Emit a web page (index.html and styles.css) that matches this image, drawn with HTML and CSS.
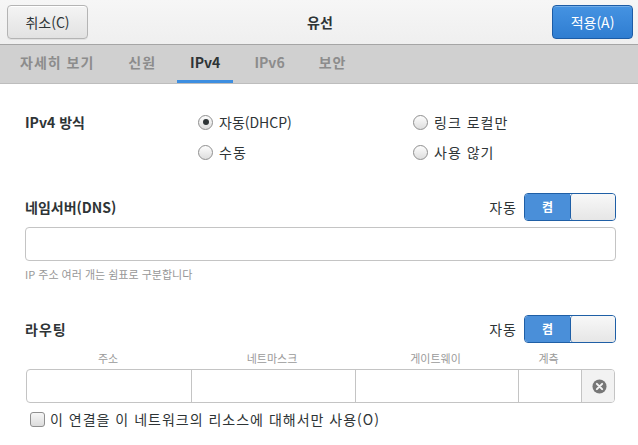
FILE: index.html
```html
<!DOCTYPE html>
<html lang="ko">

<head>
  <meta charset="utf-8">
  <title>유선</title>
  <link rel="stylesheet" href="styles.css">
</head>

<body>
  <div class="win">
    <div class="hbar">
      <button class="btn">취소(C)</button>
      <div class="title">유선</div>
      <button class="btn suggested">적용(A)</button>
    </div>

    <div class="tabs">
      <div class="tab ko">자세히 보기</div>
      <div class="tab ko">신원</div>
      <div class="tab active">IPv4</div>
      <div class="tab">IPv6</div>
      <div class="tab ko">보안</div>
    </div>

    <div class="page">
      <div class="method">
        <div class="lbl">IPv4 방식</div>
        <label class="radio"><span class="rb on"></span>자동(DHCP)</label>
        <label class="radio ko"><span class="rb"></span>링크 로컬만</label>
        <div></div>
        <label class="radio ko"><span class="rb"></span>수동</label>
        <label class="radio ko"><span class="rb"></span>사용 않기</label>
      </div>

      <div class="sec dns">
        <div class="lbl">네임서버(DNS)</div>
        <div class="auto">
          <span class="ko">자동</span>
          <div class="switch"><span class="sw-on">켬</span><span class="knob"></span></div>
        </div>
      </div>
      <div class="entry"></div>
      <div class="hint">IP 주소 여러 개는 쉼표로 구분합니다</div>

      <div class="sec route">
        <div class="lbl ko">라우팅</div>
        <div class="auto">
          <span class="ko">자동</span>
          <div class="switch"><span class="sw-on">켬</span><span class="knob"></span></div>
        </div>
      </div>
      <div class="cols">
        <span>주소</span>
        <span>네트마스크</span>
        <span>게이트웨이</span>
        <span>계측</span>
        <span></span>
      </div>
      <div class="rrow">
        <div class="cell"></div>
        <div class="cell"></div>
        <div class="cell"></div>
        <div class="cell"></div>
        <div class="cell del">
          <svg width="15" height="15" viewBox="0 0 16 16">
            <circle cx="8" cy="8" r="7.5" fill="#777"/>
            <path d="M5.2 5.2 L10.8 10.8 M10.8 5.2 L5.2 10.8" stroke="#f4f4f4" stroke-width="2.2" stroke-linecap="round"/>
          </svg>
        </div>
      </div>

      <label class="check ko"><span class="cb"></span>이 연결을 이 네트워크의 리소스에 대해서만 사용(O)</label>
    </div>
  </div>
</body>

</html>
```

FILE: styles.css
```css
html,
body {
  margin: 0;
  padding: 0;
  background: #fff;
}

body {
  width: 638px;
  height: 445px;
  overflow: hidden;
  font-family: "Noto Sans CJK KR", "Noto Sans", sans-serif;
  font-size: 14px;
  color: #2e3436;
}

.ko {
  letter-spacing: 1px;
}

.hbar {
  height: 45px;
  box-sizing: border-box;
  display: grid;
  grid-template-columns: 81px 1fr 81px;
  align-items: center;
  padding: 0 5px 0 7px;
  background: linear-gradient(#f6f6f6, #efefef);
  border-bottom: 1px solid #a5a5a5;
}

.btn {
  height: 34px;
  font-family: inherit;
  font-size: 14px;
  color: #2e3436;
  border: 1px solid #b4b4b4;
  border-radius: 4px;
  background: linear-gradient(#f4f4f4, #e2e2e2);
  box-shadow: inset 0 1px #fff, 0 1px rgba(0, 0, 0, .06);
  padding: 0;
}

.btn.suggested {
  color: #fff;
  border-color: #1c5ca6;
  background: linear-gradient(#4593e2, #2f7dd1);
  box-shadow: inset 0 1px rgba(255, 255, 255, .25);
}

.title {
  text-align: center;
  font-weight: 700;
  font-size: 14px;
}

.tabs {
  height: 39px;
  box-sizing: border-box;
  display: flex;
  gap: 8px;
  padding-left: 7px;
  background: #d0d0d0;
  border-bottom: 1px solid #bdbdbd;
}

.tab {
  padding: 0 13px;
  line-height: 35px;
  font-weight: 700;
  color: #8c8c8c;
  border-bottom: 3px solid transparent;
}

.tab.active {
  color: #2e3436;
  border-bottom-color: #3d8ee0;
}

.page {
  padding: 28px 22px 0 25px;
}

.lbl {
  font-weight: 700;
}

.method {
  display: grid;
  grid-template-columns: 173px 215px 1fr;
  grid-auto-rows: 20px;
  row-gap: 10px;
  align-items: center;
}

.radio,
.check {
  display: flex;
  align-items: center;
  gap: 6px;
}

.rb {
  width: 15px;
  height: 15px;
  box-sizing: border-box;
  border: 1px solid #8f8f8f;
  border-radius: 50%;
  background: linear-gradient(#fdfdfd, #dedede);
  display: flex;
  align-items: center;
  justify-content: center;
}

.rb.on::after {
  content: "";
  width: 6px;
  height: 6px;
  border-radius: 50%;
  background: #2e3436;
}

.sec {
  display: flex;
  justify-content: space-between;
  align-items: center;
  height: 28px;
}

.dns {
  margin-top: 31px;
}

.auto {
  display: flex;
  align-items: center;
  gap: 7px;
}

.switch {
  width: 92px;
  height: 28px;
  box-sizing: border-box;
  display: flex;
  border: 1px solid #1f5fa6;
  border-radius: 4px;
  overflow: hidden;
  letter-spacing: 0;
}

.sw-on {
  width: 45px;
  background: #4a8fd9;
  color: #fff;
  font-weight: 700;
  font-size: 12px;
  text-align: center;
  line-height: 26px;
}

.knob {
  flex: 1;
  border-left: 1px solid #1f5fa6;
  border-radius: 3px;
  background: linear-gradient(#f8f8f8, #e6e6e6);
}

.entry {
  margin-top: 6px;
  height: 34px;
  box-sizing: border-box;
  border: 1px solid #c4c4c4;
  border-radius: 4px;
}

.hint {
  margin-top: 5px;
  font-size: 11px;
  color: #979797;
}

.route {
  margin-top: 33px;
}

.cols,
.rrow {
  display: grid;
  grid-template-columns: 164px 164px 163px 63px 35px;
  margin-left: 1px;
  width: 589px;
}

.cols {
  margin-top: 4px;
  height: 22px;
  align-items: center;
  text-align: center;
  font-size: 11px;
  color: #9a9a9a;
}

.rrow {
  height: 34px;
  box-sizing: border-box;
  border: 1px solid #c4c4c4;
  border-radius: 4px;
  overflow: hidden;
}

.cell {
  border-left: 1px solid #c4c4c4;
}

.cell:first-child {
  border-left: 0;
}

.cell.del {
  background: #f2f2f2;
  display: flex;
  align-items: center;
  justify-content: center;
}

.check {
  margin-top: 6px;
  margin-left: 5px;
  gap: 5px;
}

.cb {
  width: 15px;
  height: 15px;
  box-sizing: border-box;
  border: 1px solid #8f8f8f;
  border-radius: 3px;
  background: linear-gradient(#f6f6f6, #dcdcdc);
}
```
